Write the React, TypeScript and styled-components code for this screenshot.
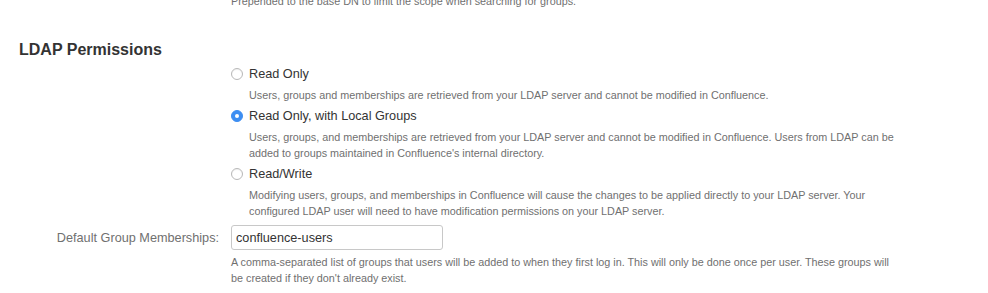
import React, { FC, useState } from 'react';
import styled, { createGlobalStyle } from 'styled-components';

const GlobalStyle = createGlobalStyle`
  html, body {
    margin: 0;
    padding: 0;
    background: #fff;
  }
  body {
    font-family: 'Liberation Sans', Arial, Helvetica, sans-serif;
    color: #333;
    overflow: hidden;
  }
`;

const Page = styled.div`
  width: 988px;
  height: 293px;
  overflow: hidden;
  padding-left: 19px;
  box-sizing: border-box;
`;

const FieldColumn = styled.div`
  margin-left: 212px;
  width: 668px;
`;

const Help = styled.div<{ $indent?: boolean }>`
  font-size: 10.8px;
  line-height: 16px;
  color: #707070;
  margin-left: ${(p) => (p.$indent ? '18px' : '0')};
`;

const TopHelp = styled(Help)`
  margin-top: -7px;
`;

const Heading = styled.h2`
  margin: 31px 0 4px;
  font-size: 16px;
  line-height: 20px;
  font-weight: 700;
  color: #333;
`;

const OptionList = styled.div`
  display: flex;
  flex-direction: column;
  gap: 3px;
`;

const Option = styled.div`
  display: flex;
  flex-direction: column;
  gap: 3px;
`;

const RadioLabel = styled.label`
  display: flex;
  align-items: center;
  height: 20px;
  font-size: 12.7px;
  color: #333;
  cursor: pointer;
`;

const RadioDot = styled.span<{ $checked: boolean }>`
  width: 12px;
  height: 12px;
  box-sizing: border-box;
  border-radius: 50%;
  margin-right: 6px;
  flex-shrink: 0;
  position: relative;
  background: ${(p) => (p.$checked ? '#3d8ef2' : '#fff')};
  border: 1px solid ${(p) => (p.$checked ? '#3d8ef2' : '#b8b8b8')};
  box-shadow: ${(p) => (p.$checked ? 'none' : 'inset 0 1px 1px rgba(0,0,0,0.06)')};
  &::after {
    content: '';
    display: ${(p) => (p.$checked ? 'block' : 'none')};
    position: absolute;
    width: 4px;
    height: 4px;
    border-radius: 50%;
    background: #fff;
    left: 3px;
    top: 3px;
  }
`;

const FieldRow = styled.div`
  display: flex;
  align-items: center;
  margin-top: 6px;
`;

const FieldLabel = styled.label`
  width: 200px;
  text-align: right;
  font-size: 12.7px;
  color: #707070;
  margin-right: 12px;
`;

const TextInput = styled.input`
  width: 212px;
  height: 25px;
  box-sizing: border-box;
  border: 1px solid #c8c8c8;
  border-radius: 3px;
  padding: 0 4px;
  font-family: 'Liberation Sans', Arial, Helvetica, sans-serif;
  font-size: 12.7px;
  color: #333;
  outline: none;
`;

const InputHelp = styled(Help)`
  margin-top: 4px;
`;

type Perm = {
  id: string;
  label: string;
  desc: string;
};

const perms: Perm[] = [
  {
    id: 'ro',
    label: 'Read Only',
    desc: 'Users, groups and memberships are retrieved from your LDAP server and cannot be modified in Confluence.',
  },
  {
    id: 'rolocal',
    label: 'Read Only, with Local Groups',
    desc: "Users, groups, and memberships are retrieved from your LDAP server and cannot be modified in Confluence. Users from LDAP can be added to groups maintained in Confluence's internal directory.",
  },
  {
    id: 'rw',
    label: 'Read/Write',
    desc: 'Modifying users, groups, and memberships in Confluence will cause the changes to be applied directly to your LDAP server. Your configured LDAP user will need to have modification permissions on your LDAP server.',
  },
];

const App: FC = () => {
  const [perm, setPerm] = useState('rolocal');
  const [groups, setGroups] = useState('confluence-users');

  return (
    <Page>
      <GlobalStyle />
      <FieldColumn>
        <TopHelp>Prepended to the base DN to limit the scope when searching for groups.</TopHelp>
      </FieldColumn>
      <Heading>LDAP Permissions</Heading>
      <FieldColumn>
        <OptionList>
          {perms.map((p) => (
            <Option key={p.id}>
              <RadioLabel onClick={() => setPerm(p.id)}>
                <RadioDot $checked={perm === p.id} />
                {p.label}
              </RadioLabel>
              <Help $indent>{p.desc}</Help>
            </Option>
          ))}
        </OptionList>
      </FieldColumn>
      <FieldRow>
        <FieldLabel htmlFor="groups">Default Group Memberships:</FieldLabel>
        <TextInput id="groups" value={groups} onChange={(e) => setGroups(e.target.value)} />
      </FieldRow>
      <FieldColumn>
        <InputHelp>
          A comma-separated list of groups that users will be added to when they first log in. This will only be done once per user. These groups will be created if they don't already exist.
        </InputHelp>
      </FieldColumn>
    </Page>
  );
};

export default App;
